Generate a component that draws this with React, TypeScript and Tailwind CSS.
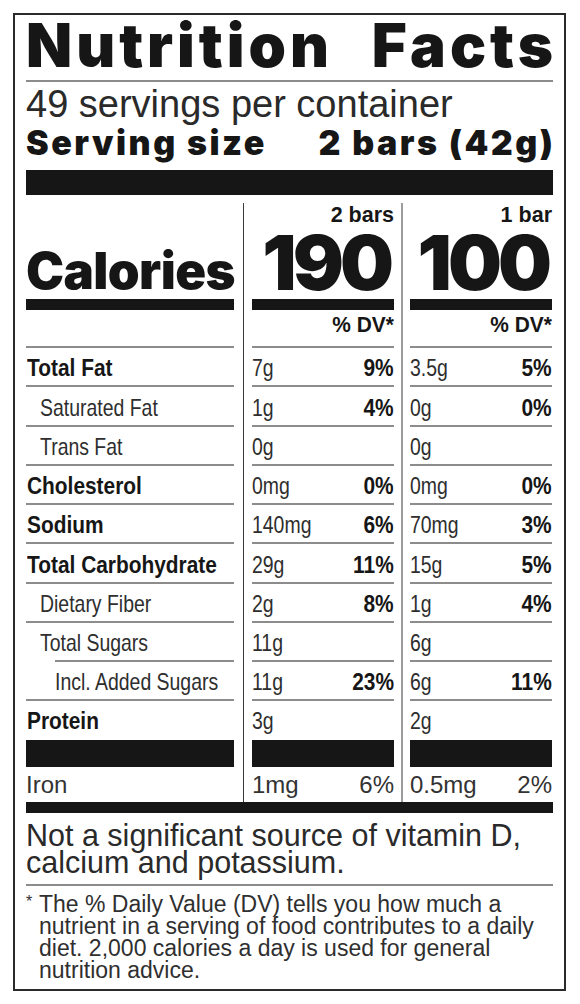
import React from "react";

const HEAVY = "font-['Inter','Liberation_Sans',sans-serif] font-black";
const SANS = "font-['Liberation_Sans','Arial',sans-serif]";

type R = {
  label: string;
  bold?: boolean;
  indent?: 0 | 1 | 2;
  a: string;
  ap?: string;
  b: string;
  bp?: string;
  lineIndent?: boolean;
  tall?: boolean;
};

const rows: R[] = [
  { label: "Total Fat", bold: true, a: "7g", ap: "9%", b: "3.5g", bp: "5%" },
  { label: "Saturated Fat", indent: 1, a: "1g", ap: "4%", b: "0g", bp: "0%", tall: true },
  { label: "Trans Fat", indent: 1, a: "0g", b: "0g" },
  { label: "Cholesterol", bold: true, a: "0mg", ap: "0%", b: "0mg", bp: "0%" },
  { label: "Sodium", bold: true, a: "140mg", ap: "6%", b: "70mg", bp: "3%" },
  { label: "Total Carbohydrate", bold: true, a: "29g", ap: "11%", b: "15g", bp: "5%", tall: true },
  { label: "Dietary Fiber", indent: 1, a: "2g", ap: "8%", b: "1g", bp: "4%" },
  { label: "Total Sugars", indent: 1, a: "11g", b: "6g", lineIndent: true },
  { label: "Incl. Added Sugars", indent: 2, a: "11g", ap: "23%", b: "6g", bp: "11%" },
];

/* condensed look: Liberation Sans narrowed horizontally */
function Cond({ children, bold, right }: { children: React.ReactNode; bold?: boolean; right?: boolean }) {
  return (
    <span
      className={`inline-block whitespace-nowrap ${right ? "origin-right" : "origin-left"} ${
        bold ? "scale-x-[0.87] font-bold text-[#161616]" : "scale-x-[0.81] text-[#2e2e2e]"
      }`}
    >
      {children}
    </span>
  );
}

function DivA() {
  return (
    <div className="flex w-[18px] shrink-0 justify-center">
      <div className="w-[1px] bg-[#3a3a3a]" />
    </div>
  );
}
function DivB() {
  return (
    <div className="flex w-[16px] shrink-0 justify-center">
      <div className="w-[2px] bg-[#9c9c9c]" />
    </div>
  );
}

function Line({ className = "" }: { className?: string }) {
  return <div className={`h-[2px] bg-[#8c8c8c] ${className}`} />;
}

function ValCell({ v, p }: { v: string; p?: string }) {
  return (
    <div className="flex w-[142px] shrink-0 flex-col">
      <div className={`flex flex-1 items-end justify-between pb-[5px] text-[24px] leading-[24px] ${SANS}`}>
        <Cond>{v}</Cond>
        {p && (
          <Cond bold right>
            {p}
          </Cond>
        )}
      </div>
      <Line />
    </div>
  );
}

function NutrientRow({ r }: { r: R }) {
  const pl = r.indent === 2 ? "pl-[29px]" : r.indent === 1 ? "pl-[14px]" : "pl-[1px]";
  return (
    <div className={`flex ${r.tall ? "h-[40px]" : "h-[39px]"}`}>
      <div className="flex w-[208px] shrink-0 flex-col">
        <div className={`flex flex-1 items-end pb-[5px] text-[24px] leading-[24px] ${SANS} ${pl}`}>
          <Cond bold={r.bold}>{r.label}</Cond>
        </div>
        <Line className={r.lineIndent ? "ml-[29px]" : ""} />
      </div>
      <DivA />
      <ValCell v={r.a} p={r.ap} />
      <DivB />
      <ValCell v={r.b} p={r.bp} />
    </div>
  );
}

export default function App() {
  return (
    <div className="min-h-[1004px] w-[580px] bg-white pt-[13px]">
      <div className="ml-[13px] w-[553px] border-2 border-[#2a2a2a] px-[11px] text-[#161616]">
        {/* Title */}
        <div className={`flex h-[65px] items-start justify-between ${HEAVY} text-[60px] leading-[60px] tracking-[4px]`}>
          <span>Nutrition</span>
          <span className="-mr-[4px]">Facts</span>
        </div>
        <Line />
        <div className={`${SANS} pt-[3px] text-[38px] leading-[38px] text-[#2a2a2a]`}>49 servings per container</div>
        <div className={`flex justify-between ${HEAVY} text-[34px] leading-[40px] tracking-[2.5px]`}>
          <span>Serving size</span>
          <span className="-mr-[2.5px]">2 bars (42g)</span>
        </div>
        <div className="mt-[7px] h-[25px] bg-[#161616]" />

        {/* Table */}
        <div className="pt-[8px]">
          {/* Header */}
          <div className="flex h-[145px]">
            <div className="flex w-[208px] shrink-0 flex-col">
              <div className={`flex h-[96px] items-end ${HEAVY} text-[51px] leading-[56px] tracking-[-0.6px]`}>Calories</div>
              <div className="h-[11px] bg-[#161616]" />
              <div className="flex-1" />
              <Line />
            </div>
            <DivA />
            {[
              ["2 bars", "190"],
              ["1 bar", "100"],
            ].map(([s, c], i) => (
              <React.Fragment key={s}>
                {i === 1 && <DivB />}
                <div className="flex w-[142px] shrink-0 flex-col">
                  <div className="flex h-[96px] flex-col items-end">
                    <div className={`${SANS} pt-[2px] text-[21.5px] font-bold leading-[20px]`}>{s}</div>
                    <div className={`mt-auto pr-[4px] pb-[4px] ${HEAVY} text-[76px] leading-[66px] tracking-[-4px]`}>{c}</div>
                  </div>
                  <div className="h-[11px] bg-[#161616]" />
                  <div className={`flex flex-1 justify-end pt-[5px] ${SANS} text-[22px] leading-[20px]`}>
                    <span className="inline-block origin-right scale-x-[0.95] font-bold whitespace-nowrap">% DV*</span>
                  </div>
                  <Line />
                </div>
              </React.Fragment>
            ))}
          </div>

          {rows.map((r) => (
            <NutrientRow key={r.label} r={r} />
          ))}

          {/* Protein */}
          <div className={`flex h-[39px] ${SANS} text-[24px] leading-[24px]`}>
            <div className="flex w-[208px] shrink-0 items-end pb-[7px] pl-[1px]">
              <Cond bold>Protein</Cond>
            </div>
            <DivA />
            <div className="flex w-[142px] shrink-0 items-end pb-[7px]">
              <Cond>3g</Cond>
            </div>
            <DivB />
            <div className="flex w-[142px] shrink-0 items-end pb-[7px]">
              <Cond>2g</Cond>
            </div>
          </div>
          <div className="flex h-[27px]">
            <div className="w-[208px] shrink-0 bg-[#161616]" />
            <DivA />
            <div className="w-[142px] shrink-0 bg-[#161616]" />
            <DivB />
            <div className="w-[142px] shrink-0 bg-[#161616]" />
          </div>
          {/* Iron */}
          <div className={`flex h-[35px] ${SANS} text-[24px] leading-[24px] text-[#333]`}>
            <div className="flex w-[208px] shrink-0 items-end pb-[5px]">Iron</div>
            <DivA />
            <div className="flex w-[142px] shrink-0 items-end justify-between pb-[5px]">
              <span>1mg</span>
              <span>6%</span>
            </div>
            <DivB />
            <div className="flex w-[142px] shrink-0 items-end justify-between pb-[5px]">
              <span>0.5mg</span>
              <span>2%</span>
            </div>
          </div>
          <div className="h-[11px] bg-[#161616]" />
        </div>

        {/* Note */}
        <div className={`${SANS} pt-[9px] pb-[8px] text-[30.5px] leading-[27px] text-[#2a2a2a]`}>
          Not a significant source of vitamin D,
          <br />
          calcium and potassium.
        </div>
        <Line />
        <div className={`flex ${SANS} pt-[7px] pb-[8px] text-[23px] leading-[22px] text-[#2f2f2f]`}>
          <span className="w-[13px] shrink-0 text-[16px] leading-[18px]">*</span>
          <p>
            The % Daily Value (DV) tells you how much a nutrient in a serving of food contributes to a daily diet. 2,000
            calories a day is used for general nutrition advice.
          </p>
        </div>
      </div>
    </div>
  );
}
